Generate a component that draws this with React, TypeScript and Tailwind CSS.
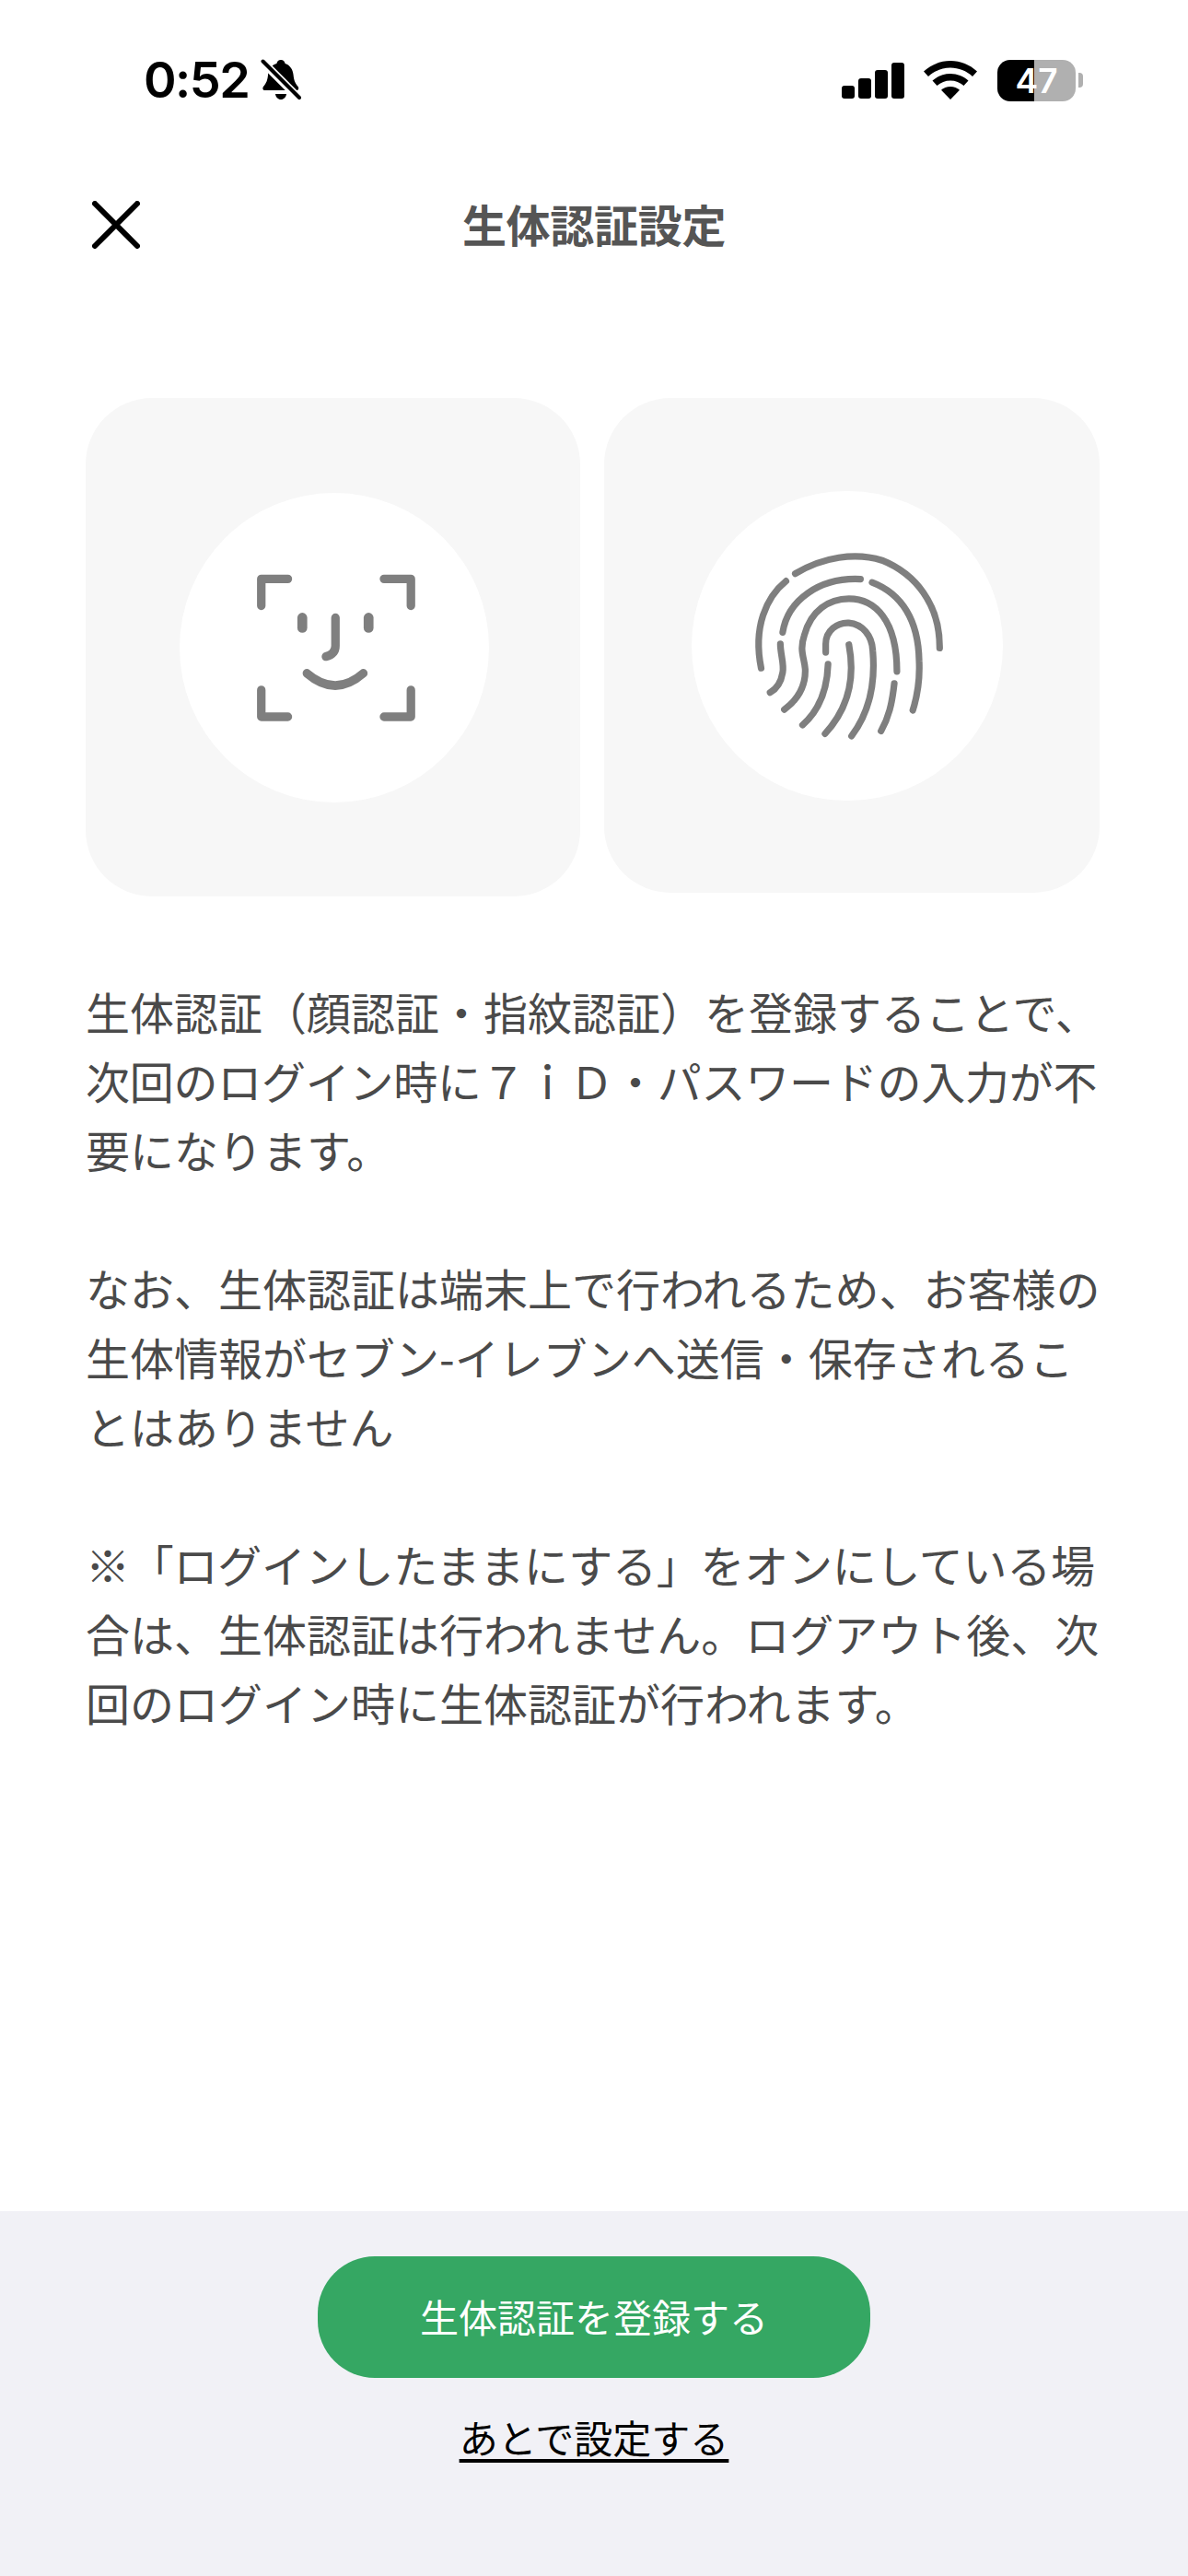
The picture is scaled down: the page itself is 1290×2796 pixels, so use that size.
import React from "react";

const CJK = "font-['Hiragino_Sans','Noto_Sans_CJK_JP',sans-serif]";

function BellSlash() {
  return (
    <svg width="44" height="46" viewBox="0 0 44 46" className="ml-[13px]">
      <path
        d="M22 1c2.500 0 4 1.600 4.600 4 5.500 1.800 8.400 6.400 9 12.500.5 5 1.500 8.500 5 12.500 1 1.200 1 4-1.500 4H4.500C2 34 2 31.200 3 30c3.500-4 4.500-7.500 5-12.500C8.600 11.400 11.500 6.800 17.400 5 18 2.600 19.500 1 22 1z"
        fill="#000"
      />
      <path d="M16 38h12c-.4 3.500-3 6-6 6s-5.600-2.500-6-6z" fill="#000" />
      <path d="M1 2 43 44" stroke="#fff" strokeWidth="9" />
      <path d="M2.500 2.500 42 42" stroke="#000" strokeWidth="4" strokeLinecap="round" />
    </svg>
  );
}

function StatusIcons() {
  return (
    <div className="flex items-center">
      <div className="flex items-end gap-[4px] h-[39px] w-[68px]">
        <div className="w-[14px] h-[14px] rounded-[3px] bg-black" />
        <div className="w-[14px] h-[22px] rounded-[3px] bg-black" />
        <div className="w-[14px] h-[31px] rounded-[3px] bg-black" />
        <div className="w-[14px] h-[39px] rounded-[3px] bg-black" />
      </div>
      <svg width="58" height="42" viewBox="0 0 58 42" className="ml-[21px]">
        <path d="M29 0c11 0 21 4.200 29 11.500l-5 5.500C46.500 11 38 7.500 29 7.500S11.500 11 5 17L0 11.500C8 4.200 18 0 29 0z" fill="#000" />
        <path d="M29 14c7.500 0 14 2.800 19.500 7.500l-5 5.500C39.500 23.500 34.500 21.500 29 21.500S18.500 23.500 14.500 27l-5-5.500C15 16.800 21.500 14 29 14z" fill="#000" />
        <path d="M29 28c4 0 7.500 1.400 10 3.800L29 42 19 31.800C21.500 29.400 25 28 29 28z" fill="#000" />
      </svg>
      <div className="ml-[22px] flex items-center">
        <div className="w-[85px] h-[45px] rounded-[14px] bg-[linear-gradient(90deg,#000_47%,#b0b0b0_47%)] flex items-center justify-center text-white text-[37px] font-semibold leading-none font-['Inter',sans-serif]">
          47
        </div>
        <div className="ml-[3px] w-[5px] h-[16px] rounded-r-[4px] bg-[#b0b0b0]" />
      </div>
    </div>
  );
}

function FaceIcon() {
  return (
    <svg width="336" height="336" viewBox="322 313 943 925" preserveAspectRatio="none" fill="none" stroke="#7f7f7f" strokeLinecap="round" strokeLinejoin="round" strokeWidth="26" className="blur-[0.7px]">
      <path d="M571 650V570H652" />
      <path d="M945 570H1027V650" />
      <path d="M571 902V982H652" />
      <path d="M945 982H1027V902" />
      <path d="M696 686V716" strokeWidth="30" />
      <path d="M898 686V716" strokeWidth="30" />
      <path d="M797 686V770Q797 795 768 802" />
      <path d="M710 852Q797 925 882 852" />
    </svg>
  );
}

function FingerprintIcon() {
  return (
    <svg width="338" height="336" viewBox="285 313 940 925" preserveAspectRatio="none" fill="none" stroke="#7f7f7f" strokeLinecap="round" strokeWidth="20" className="blur-[0.7px]">
      <path d="M598 560C680 510 780 495 860 520C960 560 1035 650 1034 782" />
      <path d="M570 582C510 630 470 720 495 842" />
      <path d="M560 735C575 640 670 570 795 576" />
      <path d="M830 586C920 620 970 700 972 820C975 880 965 930 953 968" />
      <path d="M553 770C553 800 565 830 560 855C555 885 540 905 522 915" />
      <path d="M565 966C600 940 630 900 628 845C625 810 610 790 625 745C645 670 700 635 760 635C840 635 905 700 905 852" />
      <path d="M897 888C890 950 880 990 857 1030" />
      <path d="M690 795V770C690 730 725 705 760 707C800 710 830 745 832 790C840 880 825 970 768 1045" />
      <path d="M697 830C695 890 680 960 620 1012" />
      <path d="M760 772C775 850 770 950 688 1038" />
    </svg>
  );
}

export default function App() {
  return (
    <div className={`w-[1290px] h-[2796px] bg-white flex flex-col ${CJK}`}>
      {/* status bar */}
      <div className="h-[174px] pl-[156px] pr-[114px] flex items-center justify-between">
        <div className="flex items-center">
          <span className="text-[54px] font-semibold leading-none tracking-[-1.5px] text-black font-['Inter',sans-serif]">0:52</span>
          <BellSlash />
        </div>
        <StatusIcons />
      </div>

      {/* header */}
      <div className="h-[140px] px-[100px] grid grid-cols-[1fr_auto_1fr] items-center">
        <svg width="52" height="52" viewBox="0 0 52 52" stroke="#000" strokeWidth="6" strokeLinecap="round">
          <path d="M3 3 49 49M49 3 3 49" />
        </svg>
        <h1 className="text-[48px] font-bold leading-none text-[#555555] pb-[4px] tracking-[-0.3px]">生体認証設定</h1>
        <div />
      </div>

      {/* main */}
      <div className="flex-1 px-[93px] pt-[118px]">
        <div className="flex items-start gap-[26px] w-[1104px]">
          <div className="w-[537px] h-[541px] rounded-[72px] bg-[#f7f7f7] flex items-center justify-center pl-[3px]">
            <div className="w-[336px] h-[336px] rounded-full bg-white">
              <FaceIcon />
            </div>
          </div>
          <div className="w-[538px] h-[537px] rounded-[72px] bg-[#f7f7f7] flex items-center justify-center pr-[10px]">
            <div className="w-[338px] h-[336px] rounded-full bg-white">
              <FingerprintIcon />
            </div>
          </div>
        </div>

        <div className="mt-[87px] w-[1110px] text-[48px] leading-[75px] text-[#4a4a4a] whitespace-nowrap">
          <p>
            生体認証（顔認証・指紋認証）を登録することで、
            <br />
            <span className="tracking-[-0.25px]">次回のログイン時に７ｉＤ・パスワードの入力が不</span>
            <br />
            要になります。
          </p>
          <p className="mt-[75px]">
            なお、生体認証は端末上で行われるため、お客様の
            <br />
            生体情報がセブン-イレブンへ送信・保存されるこ
            <br />
            とはありません
          </p>
          <p className="mt-[75px]">
            <span className="tracking-[-0.25px]">※「ログインしたままにする」をオンにしている場</span>
            <br />
            合は、生体認証は行われません。ログアウト後、次
            <br />
            回のログイン時に生体認証が行われます。
          </p>
        </div>
      </div>

      {/* footer */}
      <div className="h-[396px] bg-[#f1f1f6] flex flex-col items-center pt-[49px]">
        <button className="w-[600px] h-[132px] rounded-[62px] bg-[#35a763] text-white text-[42px] leading-none flex items-center justify-center pb-[3px]">
          生体認証を登録する
        </button>
        <a className="mt-[34px] text-[42px] leading-[60px] text-black underline underline-offset-[6px] decoration-[4px]">
          あとで設定する
        </a>
      </div>
    </div>
  );
}
